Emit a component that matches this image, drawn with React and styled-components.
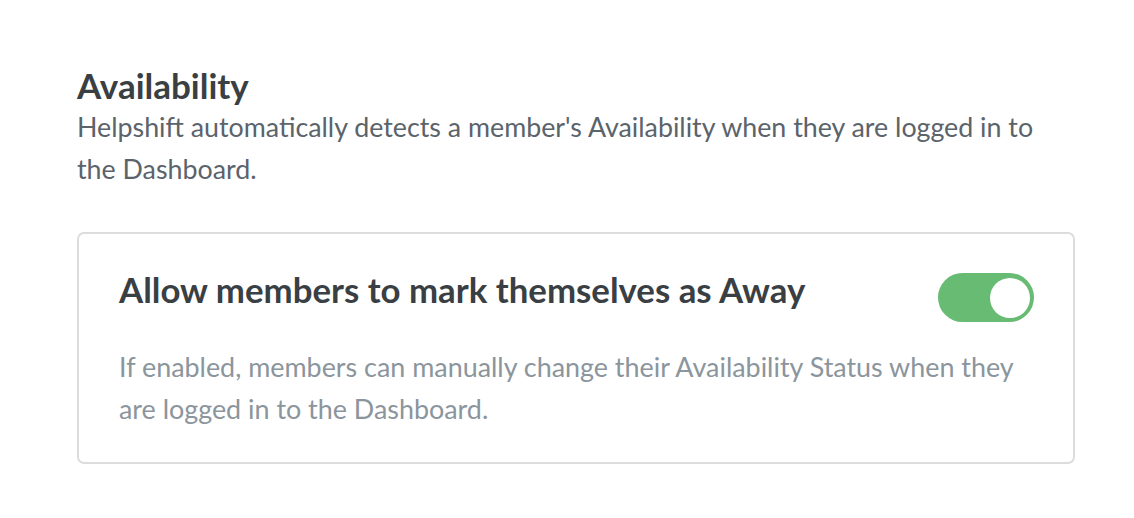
import React from 'react';
import styled, { createGlobalStyle } from 'styled-components';

const Global = createGlobalStyle`
  body {
    margin: 0;
    background: #ffffff;
    font-family: Lato, "Open Sans", sans-serif;
  }
`

const Page = styled.div`
  padding: 65px 59px 40px 77px;
`
const Heading = styled.h2`
  margin: 0;
  font-size: 35px;
  font-weight: 700;
  line-height: 41px;
  color: #3a3f44;
`
const Intro = styled.p`
  margin: 0;
  font-size: 26.8px;
  line-height: 42px;
  color: #5b636b;
  max-width: 965px;
`
const Card = styled.div`
  margin-top: 42px;
  border: 2px solid #dcdcdc;
  border-radius: 7px;
  padding: 36px 39px 32px 40px;
`
const Row = styled.div`
  display: flex;
  align-items: flex-start;
  justify-content: space-between;
`
const Title = styled.h3`
  margin: 0;
  font-size: 34.8px;
  font-weight: 700;
  line-height: 40px;
  color: #3a3f44;
`
const Switch = styled.button`
  margin-top: 3px;
  width: 96px;
  height: 49px;
  border: none;
  border-radius: 25px;
  background: ${p => (p.on ? '#67bb73' : '#cfd4d8')};
  display: flex;
  align-items: center;
  justify-content: ${p => (p.on ? 'flex-end' : 'flex-start')};
  padding: 0 4px;
  cursor: pointer;
`
const Knob = styled.span`
  width: 40px;
  height: 40px;
  border-radius: 50%;
  background: #ffffff;
`
const Desc = styled.p`
  margin: 24px 0 0;
  font-size: 26.9px;
  line-height: 42px;
  color: #8b959d;
`

export default function App() {
  return (
    <>
      <Global />
      <Page>
        <Heading>Availability</Heading>
        <Intro>
          Helpshift automatically detects a member's Availability when they are logged in to the Dashboard.
        </Intro>
        <Card>
          <Row>
            <Title>Allow members to mark themselves as Away</Title>
            <Switch on aria-label="Allow members to mark themselves as Away">
              <Knob />
            </Switch>
          </Row>
          <Desc>
            If enabled, members can manually change their Availability Status when they are logged in to the Dashboard.
          </Desc>
        </Card>
      </Page>
    </>
  );
}
